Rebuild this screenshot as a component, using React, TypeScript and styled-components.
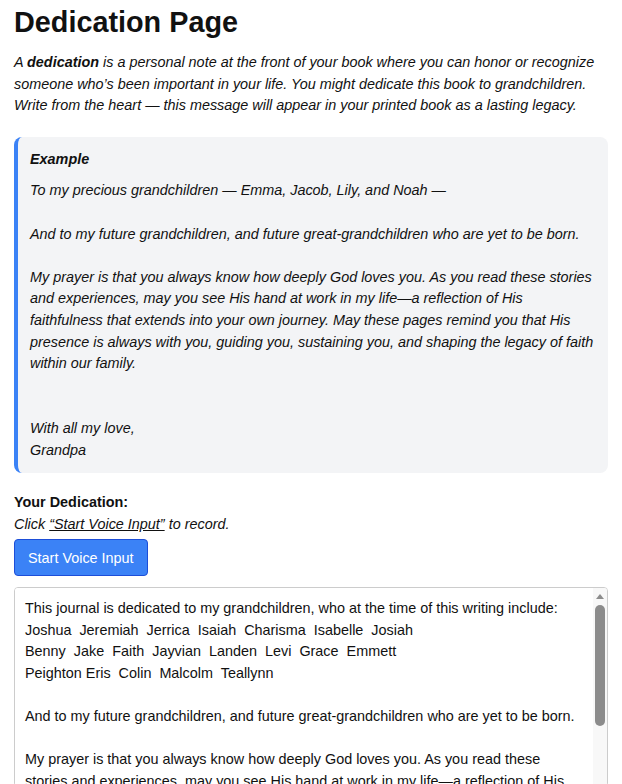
import React, { useState } from "react";
import styled, { createGlobalStyle } from "styled-components";

const GlobalStyle = createGlobalStyle`
  html, body {
    margin: 0;
    padding: 0;
    background: #ffffff;
  }
  body {
    font-family: "Liberation Sans", Arial, sans-serif;
    color: #111111;
  }
`;

const Page = styled.div`
  padding: 6px 14px 0 14px;
`;

const Title = styled.h1`
  margin: 0;
  font-size: 28.8px;
  font-weight: 700;
  line-height: normal;
  color: #111111;
`;

const Intro = styled.p`
  margin: 13px 0 0 0;
  font-size: 14.4px;
  font-style: italic;
  line-height: 21.6px;
`;

const ExampleBox = styled.div`
  margin-top: 20px;
  background: #f3f4f6;
  border-left: 4px solid #3b82f6;
  border-radius: 8px;
  padding: 12px 9px 12px 12px;
`;

const ExampleTitle = styled.div`
  font-size: 14.4px;
  font-weight: 700;
  font-style: italic;
  line-height: 21.6px;
  margin-bottom: 10px;
`;

const ExampleText = styled.div`
  font-size: 14.4px;
  font-style: italic;
  line-height: 21.6px;
  white-space: pre-wrap;
`;

const Section = styled.div`
  margin-top: 19px;
  display: flex;
  flex-direction: column;
  align-items: flex-start;
`;

const Label = styled.div`
  font-size: 14.4px;
  font-weight: 700;
  line-height: 21.6px;
`;

const Hint = styled.div`
  font-size: 14.4px;
  font-style: italic;
  line-height: 21.6px;

  span {
    text-decoration: underline;
  }
`;

const VoiceButton = styled.button`
  margin-top: 4px;
  height: 37px;
  padding: 0 13px;
  background: #3b82f6;
  color: #ffffff;
  border: 1px solid #1d4ed8;
  border-radius: 4px;
  font-family: "Liberation Sans", Arial, sans-serif;
  font-size: 14.4px;
  cursor: pointer;
`;

const InputFrame = styled.div`
  margin-top: 11px;
  box-sizing: border-box;
  width: 100%;
  height: 200px;
  display: flex;
  border: 1px solid #cccccc;
  border-radius: 4px;
  overflow: hidden;
  background: #ffffff;
`;

const DedicationInput = styled.textarea`
  flex: 1;
  min-width: 0;
  box-sizing: border-box;
  padding: 10px 8px 10px 10px;
  border: none;
  font-family: "Liberation Sans", Arial, sans-serif;
  font-size: 14.4px;
  line-height: 21.6px;
  color: #111111;
  resize: none;
  outline: none;
  overflow: hidden;
`;

const ScrollTrack = styled.div`
  width: 14px;
  flex: none;
  display: flex;
  flex-direction: column;
  align-items: center;
  padding-top: 6px;
  background: #f8f8f8;
`;

const ScrollArrow = styled.div`
  width: 0;
  height: 0;
  border-left: 4px solid transparent;
  border-right: 4px solid transparent;
  border-bottom: 5px solid #8c8c8c;
`;

const ScrollThumb = styled.div`
  margin-top: 6px;
  width: 10px;
  height: 121px;
  border-radius: 5px;
  background: #8c8c8c;
`;

const example = `To my precious grandchildren — Emma, Jacob, Lily, and Noah —

And to my future grandchildren, and future great-grandchildren who are yet to be born.

My prayer is that you always know how deeply God loves you. As you read these stories and experiences, may you see His hand at work in my life—a reflection of His faithfulness that extends into your own journey. May these pages remind you that His presence is always with you, guiding you, sustaining you, and shaping the legacy of faith within our family.


With all my love,
Grandpa`;

const initialDedication = `This journal is dedicated to my grandchildren, who at the time of this writing include:
Joshua  Jeremiah  Jerrica  Isaiah  Charisma  Isabelle  Josiah
Benny  Jake  Faith  Jayvian  Landen  Levi  Grace  Emmett
Peighton Eris  Colin  Malcolm  Teallynn

And to my future grandchildren, and future great-grandchildren who are yet to be born.

My prayer is that you always know how deeply God loves you. As you read these stories and experiences, may you see His hand at work in my life—a reflection of His faithfulness that extends into your own journey. May these pages remind you that His presence is always with you, guiding you, sustaining you, and shaping the legacy of faith within our family.


With all my love,
Grandpa`;

export default function App() {
  const [text, setText] = useState(initialDedication);
  return (
    <Page>
      <GlobalStyle />
      <Title>Dedication Page</Title>
      <Intro>
        A <b>dedication</b> is a personal note at the front of your book where you can honor or
        recognize someone who’s been important in your life. You might dedicate this book to
        grandchildren. Write from the heart — this message will appear in your printed book as a
        lasting legacy.
      </Intro>
      <ExampleBox>
        <ExampleTitle>Example</ExampleTitle>
        <ExampleText>{example}</ExampleText>
      </ExampleBox>
      <Section>
        <Label>Your Dedication:</Label>
        <Hint>
          Click <span>“Start Voice Input”</span> to record.
        </Hint>
        <VoiceButton>Start Voice Input</VoiceButton>
        <InputFrame>
          <DedicationInput value={text} onChange={(e) => setText(e.target.value)} />
          <ScrollTrack>
            <ScrollArrow />
            <ScrollThumb />
          </ScrollTrack>
        </InputFrame>
      </Section>
    </Page>
  );
}
